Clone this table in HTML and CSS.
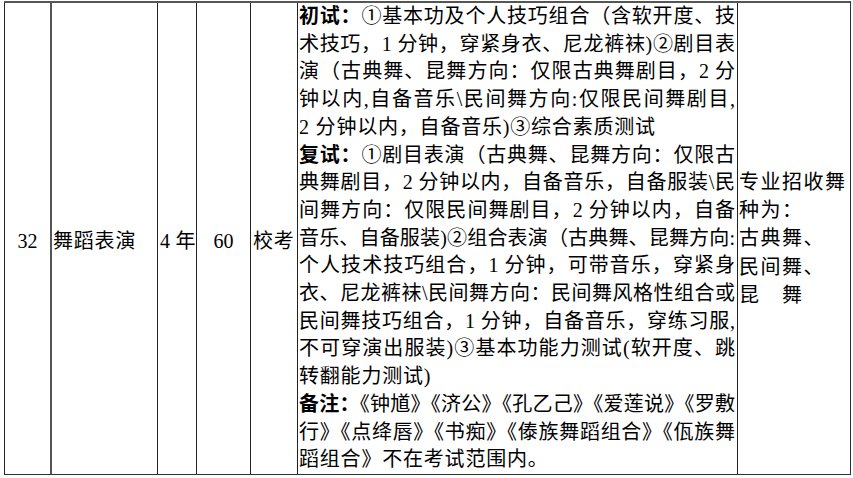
FILE: index.html
```html
<!DOCTYPE html>
<html lang="zh-CN">
<head>
<meta charset="utf-8">
<title>舞蹈表演</title>
<link rel="stylesheet" href="styles.css">
</head>
<body>
<div class="row">
  <div class="cell c-no">32</div>
  <div class="cell c-name">舞蹈表演</div>
  <div class="cell c-year">4 年</div>
  <div class="cell c-num">60</div>
  <div class="cell c-exam">校考</div>
  <div class="cell c-content">
    <div class="ln"><b>初试：</b>①基本功及个人技巧组合（含软开度、技</div>
    <div class="ln">术技巧，1 分钟，穿紧身衣、尼龙裤袜)②剧目表</div>
    <div class="ln">演（古典舞、昆舞方向：仅限古典舞剧目，2 分</div>
    <div class="ln">钟以内,自备音乐\民间舞方向:仅限民间舞剧目,</div>
    <div class="ln end">2 分钟以内，自备音乐)③综合素质测试</div>
    <div class="ln"><b>复试：</b>①剧目表演（古典舞、昆舞方向：仅限古</div>
    <div class="ln">典舞剧目，2 分钟以内，自备音乐，自备服装\民</div>
    <div class="ln">间舞方向：仅限民间舞剧目，2 分钟以内，自备</div>
    <div class="ln">音乐、自备服装)②组合表演（古典舞、昆舞方向:</div>
    <div class="ln">个人技术技巧组合，1 分钟，可带音乐，穿紧身</div>
    <div class="ln">衣、尼龙裤袜\民间舞方向：民间舞风格性组合或</div>
    <div class="ln">民间舞技巧组合，1 分钟，自备音乐，穿练习服,</div>
    <div class="ln">不可穿演出服装)③基本功能力测试(软开度、跳</div>
    <div class="ln end">转翻能力测试)</div>
    <div class="ln"><b>备注：</b>《钟馗》《济公》《孔乙己》《爱莲说》《罗敷</div>
    <div class="ln">行》《点绛唇》《书痴》《傣族舞蹈组合》《佤族舞</div>
    <div class="ln end">蹈组合》不在考试范围内。</div>
  </div>
  <div class="cell c-note">
    <div class="nl">专业招收舞</div>
    <div class="nl">种为：</div>
    <div class="nl">古典舞、</div>
    <div class="nl">民间舞、</div>
    <div class="nl">昆　舞</div>
  </div>
</div>
</body>
</html>
```

FILE: styles.css
```css
html, body {
  margin: 0;
  padding: 0;
  background: #fff;
}

body {
  font-family: "Liberation Serif", "Noto Sans CJK SC", serif;
  font-size: 20px;
  color: #000;
}

.row {
  display: grid;
  grid-template-columns: 46px 107px 39px 54px 47px 440px 112px;
  margin: 1px 0 0 4px;
  width: 846px;
  border-top: 2px solid #555;
  border-bottom: 1px solid #333;
  border-right: 1px solid #333;
}

.cell {
  border-left: 1px solid #222;
  display: flex;
  flex-direction: column;
  justify-content: center;
  padding-top: 5px;
  letter-spacing: 0.8px;
  line-height: 28px;
  white-space: nowrap;
  overflow: hidden;
}

.c-no, .c-num {
  align-items: center;
  letter-spacing: 0;
}

.c-name {
  border-left-color: #555;
  border-left-width: 2px;
  padding-left: 1px;
}

.c-year, .c-exam {
  padding-left: 2px;
}

.c-year {
  letter-spacing: 0.3px;
}

.c-content {
  justify-content: flex-start;
  padding-top: 0;
  padding-left: 1px;
  padding-right: 2px;
  line-height: 27.7px;
  letter-spacing: 0;
}

.ln {
  text-align: justify;
  text-align-last: justify;
}

.ln.end {
  text-align-last: left;
  letter-spacing: 0.8px;
}

.ln b {
  font-weight: bold;
}

.c-note {
  padding-left: 1px;
  padding-top: 0;
  line-height: 28.3px;
  letter-spacing: 1.5px;
}
```
